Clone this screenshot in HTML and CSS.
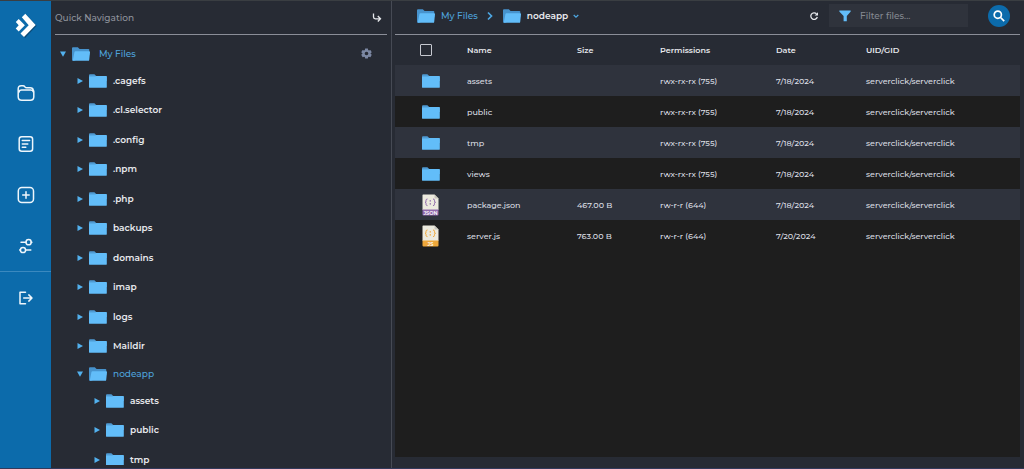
FILE: index.html
```html
<!DOCTYPE html>
<html lang="en">
<head>
<meta charset="utf-8">
<title>File Manager</title>
<meta name="viewport" content="width=device-width, initial-scale=1">
<link rel="stylesheet" href="styles.css">
</head>
<body>
<svg class="sprite" aria-hidden="true">
  <symbol id="folder" viewBox="0 0 18 14">
    <path fill="#4f9bd3" d="M0 7V1.400Q0 .2 1 .2h4.400l1.800 1.700h9.600q1 0 1 1V7z"/>
    <path fill="#62bdf9" d="M0 2.600h6.200l1-.7h9.800q.8 0 .8.900v10.100q0 .9-.9.900H.9q-.9 0-.9-.9z"/>
  </symbol>
  <symbol id="folder-open" viewBox="0 0 18 14">
    <path fill="#4793cd" d="M0 12.900V1.200Q0 .2 1 .2h4.800l1.800 1.700h8.800q.9 0 .9.900V8L2 13.800H1q-1 0-1-.9z"/>
    <path fill="#62bdf9" d="M3.500 4.300h13.700q.9 0 .8.900l-.8 7.700q-.1.900-1 .9H1.600q-.8 0-.7-.8l1.500-7.800q.2-.9 1.100-.9z"/>
  </symbol>
  <symbol id="right" viewBox="0 0 6 6"><path fill="#52b1ee" d="M.5 0 6 3 .5 6z"/></symbol>
  <symbol id="down" viewBox="0 0 6 6"><path fill="#52b1ee" d="M0 .6h6L3 5.800z"/></symbol>
  <symbol id="file" viewBox="0 0 17 22">
    <path fill="#eceade" d="M1 .5h11.500l4 4V16H.5V1z"/>
    <path fill="#c9c6bc" d="M12.500.5v4h4z"/>
    <path fill="currentColor" d="M.5 15.500h16v5q0 1-1 1h-14q-1 0-1-1z"/>
    <path fill="none" stroke="currentColor" stroke-width="1" d="M5.500 5q-1.500 0-1.500 1.300v1q0 1-1 1 1 0 1 1v1q0 1.300 1.500 1.300M11 5q1.500 0 1.500 1.300v1q0 1 1 1-1 0-1 1v1q0 1.300-1.500 1.300"/>
    <path fill="currentColor" d="M7.600 6.200h1.400v1.400H7.600zM7.600 9.200h1.400v1.400H7.600z"/>
  </symbol>
</svg>

<div class="app">
  <nav class="rail" aria-label="Main">
    <a class="rail-logo" href="#" aria-label="Home">
      <svg width="22" height="26" viewBox="0 0 22 26"><path fill="#0a4a77" d="M7.600 5 11.100 1.500 21.600 12.800 10.100 25 6.900 21.800 15.100 13.100z"/><path fill="#fff" d="M6.800 4.200 10.300.7 20.700 12 9 23.900 5.500 20.500 13.700 12.200z"/><path fill="#fff" d="M.8 8.900 3.700 6l6.200 6.300-6.200 6.100-3-3 3-3.200z"/></svg>
    </a>
    <a class="rail-link" href="#" aria-label="Files">
      <svg width="18" height="18" viewBox="0 0 18 18"><path d="M1.200 5Q1.200 1.800 4.200 1.800H6q1.200 0 1.900 1.100.6.900 1.800.9h3.500q2.800 0 3.100 2.600.5.400.5 1.300v5q0 3.500-3.500 3.500H4.700q-3.500 0-3.500-3.500zM2 8q.4-1.900 2.600-1.900h9q2.200 0 2.700 1.600"/></svg>
    </a>
    <a class="rail-link" href="#" aria-label="Documents">
      <svg width="18" height="18" viewBox="0 0 18 18"><rect x="2.200" y="1.700" width="13.400" height="14.600" rx="2.500"/><path d="M5.300 5.500h7.300M5.300 8.900h5.500M5.300 12.200h3.500"/></svg>
    </a>
    <a class="rail-link" href="#" aria-label="Add">
      <svg width="18" height="18" viewBox="0 0 18 18"><rect x="1.300" y="1.500" width="15.200" height="15" rx="3.500"/><path d="M9 5.800v6.500M5.700 9h6.500"/></svg>
    </a>
    <a class="rail-link rail-last" href="#" aria-label="Options">
      <svg width="18" height="18" viewBox="0 0 18 18"><circle cx="11.600" cy="5.200" r="2.600"/><circle cx="6" cy="13" r="2.600"/><path d="M4 5.200h5M14.200 5.200h.7M3.400 13h-.7M8.600 13h5.200"/></svg>
    </a>
    <a class="rail-link" href="#" aria-label="Log out">
      <svg width="18" height="18" viewBox="0 0 18 18"><path d="M8.500 3.300H3v11.400h5.500M6.700 9h8.100M11.800 5.900 15 9l-3.200 3.100"/></svg>
    </a>
  </nav>

  <aside class="side">
    <header class="bar side-bar">
      <h2 class="side-title">Quick Navigation</h2>
      <button class="icon-btn" aria-label="Collapse"><svg width="10" height="12" viewBox="0 0 10 12"><path class="line" d="M1.500 1.500v3.500q0 1.800 1.800 1.800h5M5.800 4l2.700 2.800-2.700 2.700"/></svg></button>
    </header>
    <div class="tree">
      <div class="node open root"><svg class="arrow"><use href="#down"/></svg><svg class="folder"><use href="#folder-open"/></svg><a href="#">My Files</a>
        <button class="icon-btn gear" aria-label="Tree settings"><svg width="11" height="11" viewBox="0 0 24 24"><path fill="#7c88a3" fill-rule="evenodd" d="M9 1h6l.6 3.200 1.800 1 3.100-1 3 5.100-2.500 2.200v1.200l2.500 2.100-3 5.200-3.100-1.100-1.800 1L15 23H9l-.6-3.100-1.800-1L3.500 20l-3-5.200L3 12.700v-1.200L.5 9.300l3-5.100 3.100 1 1.800-1zM12 8a4 4 0 1 0 0 8 4 4 0 0 0 0-8z"/></svg></button>
      </div>
      <ul class="branch">
        <li class="node"><svg class="arrow"><use href="#right"/></svg><svg class="folder"><use href="#folder"/></svg><a href="#">.cagefs</a></li>
        <li class="node"><svg class="arrow"><use href="#right"/></svg><svg class="folder"><use href="#folder"/></svg><a href="#">.cl.selector</a></li>
        <li class="node"><svg class="arrow"><use href="#right"/></svg><svg class="folder"><use href="#folder"/></svg><a href="#">.config</a></li>
        <li class="node"><svg class="arrow"><use href="#right"/></svg><svg class="folder"><use href="#folder"/></svg><a href="#">.npm</a></li>
        <li class="node"><svg class="arrow"><use href="#right"/></svg><svg class="folder"><use href="#folder"/></svg><a href="#">.php</a></li>
        <li class="node"><svg class="arrow"><use href="#right"/></svg><svg class="folder"><use href="#folder"/></svg><a href="#">backups</a></li>
        <li class="node"><svg class="arrow"><use href="#right"/></svg><svg class="folder"><use href="#folder"/></svg><a href="#">domains</a></li>
        <li class="node"><svg class="arrow"><use href="#right"/></svg><svg class="folder"><use href="#folder"/></svg><a href="#">imap</a></li>
        <li class="node"><svg class="arrow"><use href="#right"/></svg><svg class="folder"><use href="#folder"/></svg><a href="#">logs</a></li>
        <li class="node"><svg class="arrow"><use href="#right"/></svg><svg class="folder"><use href="#folder"/></svg><a href="#">Maildir</a></li>
        <li>
          <div class="node open"><svg class="arrow"><use href="#down"/></svg><svg class="folder"><use href="#folder-open"/></svg><a href="#">nodeapp</a></div>
          <ul class="branch">
            <li class="node"><svg class="arrow"><use href="#right"/></svg><svg class="folder"><use href="#folder"/></svg><a href="#">assets</a></li>
            <li class="node"><svg class="arrow"><use href="#right"/></svg><svg class="folder"><use href="#folder"/></svg><a href="#">public</a></li>
            <li class="node"><svg class="arrow"><use href="#right"/></svg><svg class="folder"><use href="#folder"/></svg><a href="#">tmp</a></li>
          </ul>
        </li>
      </ul>
    </div>
  </aside>

  <main class="main">
    <header class="bar main-bar">
      <nav class="crumbs" aria-label="Breadcrumb">
        <svg class="folder"><use href="#folder-open"/></svg><a class="crumb" href="#">My Files</a>
        <svg class="sep" width="6" height="10" viewBox="0 0 6 10"><path class="blue" stroke-width="1.700" d="M1 1.500 4.500 5 1 8.500"/></svg>
        <svg class="folder"><use href="#folder-open"/></svg><button class="crumb current">nodeapp<svg width="6" height="6" viewBox="0 0 6 6"><path class="blue" stroke-width="1.200" d="M.7 2 3 4.200 5.300 2"/></svg></button>
      </nav>
      <button class="icon-btn" aria-label="Refresh"><svg width="10" height="10" viewBox="0 0 10 10"><path class="line" d="M8.300 6A3.300 3.300 0 1 1 7.500 2.800"/><path fill="#e6e8ec" d="M9 1.200v3.400H5.600z"/></svg></button>
      <label class="filter">
        <svg width="12" height="12" viewBox="0 0 12 12"><path fill="#62bdf9" d="M.5.500h11q.6.600 0 1.200L7.800 6v5.200H4.600V6L.5 1.700Q0 1 .5.500z"/></svg>
        <input type="text" placeholder="Filter files..." aria-label="Filter files">
      </label>
      <button class="search" aria-label="Search"><svg width="12" height="12" viewBox="0 0 12 12"><circle cx="4.800" cy="4.700" r="3.600"/><path d="m7.600 7.500 3.600 3.700"/></svg></button>
    </header>
    <section class="panel">
      <table class="files">
        <colgroup><col class="c-icon"><col class="c-name"><col class="c-size"><col class="c-perm"><col class="c-date"><col></colgroup>
        <thead>
          <tr><th class="pick"><input type="checkbox" aria-label="Select all"></th><th>Name</th><th>Size</th><th>Permissions</th><th>Date</th><th>UID/GID</th></tr>
        </thead>
        <tbody>
          <tr><td class="pick"><svg class="folder"><use href="#folder"/></svg></td><td>assets</td><td></td><td>rwx-rx-rx (755)</td><td>7/18/2024</td><td>serverclick/serverclick</td></tr>
          <tr><td class="pick"><svg class="folder"><use href="#folder"/></svg></td><td>public</td><td></td><td>rwx-rx-rx (755)</td><td>7/18/2024</td><td>serverclick/serverclick</td></tr>
          <tr><td class="pick"><svg class="folder"><use href="#folder"/></svg></td><td>tmp</td><td></td><td>rwx-rx-rx (755)</td><td>7/18/2024</td><td>serverclick/serverclick</td></tr>
          <tr><td class="pick"><svg class="folder"><use href="#folder"/></svg></td><td>views</td><td></td><td>rwx-rx-rx (755)</td><td>7/18/2024</td><td>serverclick/serverclick</td></tr>
          <tr><td class="pick"><svg class="file json" viewBox="0 0 17 22"><use href="#file"/><text x="8.500" y="20.500">JSON</text></svg></td><td>package.json</td><td>467.00 B</td><td>rw-r-r (644)</td><td>7/18/2024</td><td>serverclick/serverclick</td></tr>
          <tr><td class="pick"><svg class="file js" viewBox="0 0 17 22"><use href="#file"/><text x="8.500" y="20.500">JS</text></svg></td><td>server.js</td><td>763.00 B</td><td>rw-r-r (644)</td><td>7/20/2024</td><td>serverclick/serverclick</td></tr>
        </tbody>
      </table>
    </section>
  </main>
</div>
</body>
</html>
```
FILE: styles.css
```css
* { box-sizing: border-box; }

body {
  margin: 0;
  background: #272b34;
  color: #e6e8ec;
  font-family: Montserrat, Inter, "Open Sans", sans-serif;
  font-size: 9px;
  line-height: 12px;
}

a { color: inherit; text-decoration: none; }
svg { display: block; flex: none; }
.sprite { position: absolute; width: 0; height: 0; }

button {
  padding: 0;
  border: 0;
  background: none;
  color: inherit;
  font: inherit;
}

.app {
  display: flex;
  height: 100vh;
  border-top: 1px solid #3a3e42;
  border-bottom: 1px solid #33395a;
}

/* Icon rail */
.rail {
  flex: none;
  width: 51px;
  background: #0c6bab;
}

.rail a {
  display: flex;
  align-items: center;
  justify-content: center;
}

.rail .rail-logo { height: 50px; margin-bottom: 16px; }
.rail-link { height: 51px; }
.rail .rail-last { height: 52px; border-bottom: 1px solid #3b89bf; }

.rail-link svg {
  fill: none;
  stroke: #eef6fc;
  stroke-width: 1.5;
  stroke-linecap: round;
  stroke-linejoin: round;
}

/* Shared pieces */
.bar {
  display: flex;
  align-items: center;
  flex: none;
  height: 34px;
  border-bottom: 1px solid #8b8e98;
}

.folder { width: 18px; height: 14px; }
.line { fill: none; stroke: #e6e8ec; stroke-width: 1.3; }
.blue { fill: none; stroke: #4ea8e4; }

/* Tree */
.side {
  display: flex;
  flex-direction: column;
  flex: none;
  width: 341px;
  padding: 0 4px;
  border-right: 1px solid #464a54;
}

.side-bar { justify-content: space-between; padding-right: 5px; }

.side-title {
  margin: 0;
  color: #8f939c;
  font-size: 9px;
  font-weight: 500;
}

.tree {
  flex: 1;
  min-height: 0;
  margin-bottom: 3px;
  padding: 6px 0 0 5px;
  overflow: hidden;
}

.branch {
  margin: 0;
  padding: 0 0 0 17px;
  list-style: none;
}

.node {
  display: flex;
  align-items: center;
  height: 29px;
  font-weight: 600;
}

.node:nth-child(even) { height: 30px; }
.node.open { height: 25px; color: #4ea3dc; font-weight: 500; }
.arrow { width: 6px; height: 6px; margin-right: 6px; }
.node .folder { margin-right: 6px; }
.root .folder { margin-right: 9px; }
.gear { margin-left: auto; padding-right: 15px; }

/* Main */
.main {
  display: flex;
  flex-direction: column;
  flex: 1;
  min-width: 0;
  padding: 0 4px 11px 3px;
}

.crumbs {
  display: flex;
  align-items: center;
  margin: 0 auto 4px 22px;
}

.crumb {
  margin-left: 6px;
  color: #4ea3dc;
  font-weight: 500;
}

.current {
  display: flex;
  align-items: center;
  gap: 5px;
  color: #e6e8ec;
  font-weight: 600;
}

.sep { margin: 0 10px 0 9px; }
.main-bar > .icon-btn, .filter, .search { margin-bottom: 4px; }

.filter {
  display: flex;
  align-items: center;
  gap: 9px;
  width: 139px;
  height: 23px;
  margin-left: 10px;
  padding: 0 10px;
  background: #2f333c;
}

.filter input {
  flex: 1;
  min-width: 0;
  padding: 0;
  border: 0;
  background: none;
  color: #e6e8ec;
  font: 500 9px/12px Montserrat, Inter, sans-serif;
}

.filter input::placeholder { color: #858991; opacity: 1; }

.search {
  display: flex;
  align-items: center;
  justify-content: center;
  width: 22px;
  height: 22px;
  margin-left: 20px;
  margin-right: 10px;
  border-radius: 50%;
  background: #0c6bab;
}

.search svg { fill: none; stroke: #fff; stroke-width: 1.7; }

.panel { flex: 1; min-height: 0; background: #1e1e1e; overflow: hidden; }

.files {
  width: 100%;
  border-collapse: collapse;
  table-layout: fixed;
  font-size: 8px;
  line-height: 12px;
}

.c-icon { width: 72px; }
.c-name { width: 110px; }
.c-size { width: 83px; }
.c-perm { width: 116px; }
.c-date { width: 90px; }

.files th, .files td {
  height: 31px;
  padding: 0;
  text-align: left;
  font-weight: 500;
}

.files th { height: 30px; background: #272b34; font-weight: 600; }
.files tbody tr:nth-child(odd) { background: #2f333d; }
.files tbody tr { color: #dcdfe4; }
.files td.pick { padding-left: 27px; }
.files th.pick { padding-left: 25px; }

.pick input {
  display: block;
  width: 12px;
  height: 12px;
  margin: 0;
  appearance: none;
  border: 1px solid #c6c9d0;
  border-radius: 1px;
}

.file { width: 17px; height: 22px; }
.file text { fill: #fff; font-size: 5px; font-weight: 600; text-anchor: middle; }
.json { color: #8f68ab; }
.js { color: #efa83b; }
```
